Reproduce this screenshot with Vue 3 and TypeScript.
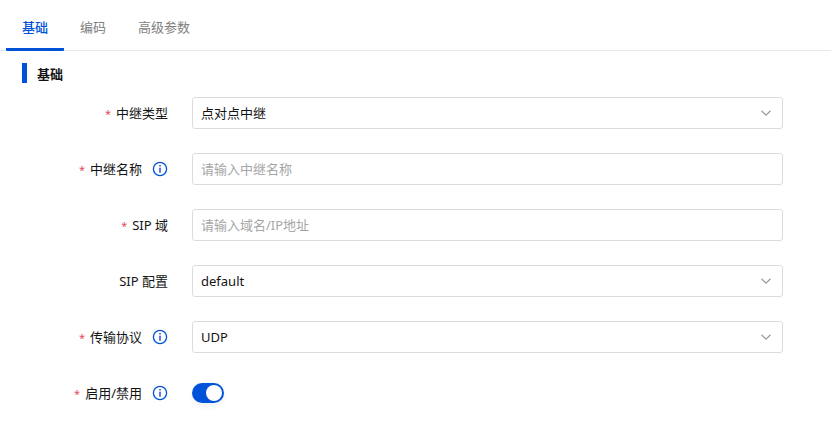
<script setup lang="ts">
interface Field {
  label: string;
  required: boolean;
  info: boolean;
  kind: "select" | "input" | "switch";
  value?: string;
  placeholder?: string;
}

const tabs = ["基础", "编码", "高级参数"];

const fields: Field[] = [
  { label: "中继类型", required: true, info: false, kind: "select", value: "点对点中继" },
  { label: "中继名称", required: true, info: true, kind: "input", placeholder: "请输入中继名称" },
  { label: "SIP 域", required: true, info: false, kind: "input", placeholder: "请输入域名/IP地址" },
  { label: "SIP 配置", required: false, info: false, kind: "select", value: "default" },
  { label: "传输协议", required: true, info: true, kind: "select", value: "UDP" },
  { label: "启用/禁用", required: true, info: true, kind: "switch" },
];
</script>

<template>
  <div class="page">
    <div class="tabs">
      <div v-for="(tab, i) in tabs" :key="tab" class="tab" :class="{ active: i === 0 }">
        {{ tab }}
      </div>
    </div>

    <div class="section-title">基础</div>

    <form class="form">
      <div v-for="f in fields" :key="f.label" class="row">
        <div class="label">
          <span v-if="f.required" class="star">*</span>
          <span class="label-text">{{ f.label }}</span>
          <svg v-if="f.info" class="info" width="16" height="16" viewBox="0 0 16 16" fill="none">
            <circle cx="8" cy="8" r="6.6" stroke="#0052d9" stroke-width="1.3" />
            <rect x="7.3" y="4" width="1.4" height="1.5" fill="#0052d9" />
            <rect x="7.3" y="6.6" width="1.4" height="5.2" fill="#0052d9" />
          </svg>
        </div>
        <div v-if="f.kind === 'select'" class="control">
          <span class="control-text">{{ f.value }}</span>
          <svg class="arrow" width="12" height="12" viewBox="0 0 12 12" fill="none">
            <path d="M1.5 3.8 6 8.2l4.5-4.4" stroke="#999" stroke-width="1.2" />
          </svg>
        </div>
        <div v-else-if="f.kind === 'input'" class="control placeholder">
          <span class="control-text">{{ f.placeholder }}</span>
        </div>
        <div v-else class="switch"><span class="knob"></span></div>
      </div>
    </form>
  </div>
</template>

<style>
html,
body {
  background: #fff;
}
</style>

<style scoped>
.page {
  width: 831px;
  height: 431px;
  overflow: hidden;
  font-family: "Noto Sans", "Noto Sans CJK SC", sans-serif;
  font-size: 13px;
  color: #141414;
}

.tabs {
  display: flex;
  height: 50px;
  padding-left: 6px;
  border-bottom: 1px solid #e7e7e7;
}

.tab {
  padding: 0 16px;
  line-height: 54px;
  height: 51px;
  color: #7f7f7f;
  box-sizing: border-box;
}

.tab.active {
  color: #0052d9;
  font-weight: 500;
  border-bottom: 3px solid #0052d9;
  border-radius: 0 0 1px 1px;
}

.section-title {
  margin: 12px 0 0 22px;
  height: 20px;
  line-height: 22px;
  padding-left: 10px;
  border-left: 5px solid #0052d9;
  font-weight: 700;
}

.form {
  margin-top: 14px;
  display: flex;
  flex-direction: column;
  gap: 24px;
}

.row {
  display: flex;
  align-items: center;
  height: 32px;
}

.label {
  width: 192px;
  padding-right: 24px;
  box-sizing: border-box;
  display: flex;
  justify-content: flex-end;
  align-items: center;
}

.label-text,
.control-text {
  line-height: 30px;
  padding-bottom: 1px;
}

.star {
  color: #e34d59;
  font-size: 11px;
  margin-right: 5px;
}

.info {
  margin-left: 10px;
}

.control {
  width: 591px;
  height: 32px;
  box-sizing: border-box;
  border: 1px solid #dcdcdc;
  border-radius: 3px;
  padding: 0 8px;
  display: flex;
  align-items: center;
  justify-content: space-between;
}

.placeholder {
  color: #a6a6a6;
}

.arrow {
  margin-right: 2px;
}

.switch {
  width: 32px;
  height: 20px;
  border-radius: 10px;
  background: #0052d9;
  position: relative;
  box-shadow: 0 3px 6px rgba(0, 0, 0, 0.06);
}

.knob {
  position: absolute;
  top: 2px;
  right: 2px;
  width: 16px;
  height: 16px;
  border-radius: 50%;
  background: #fff;
}
</style>
